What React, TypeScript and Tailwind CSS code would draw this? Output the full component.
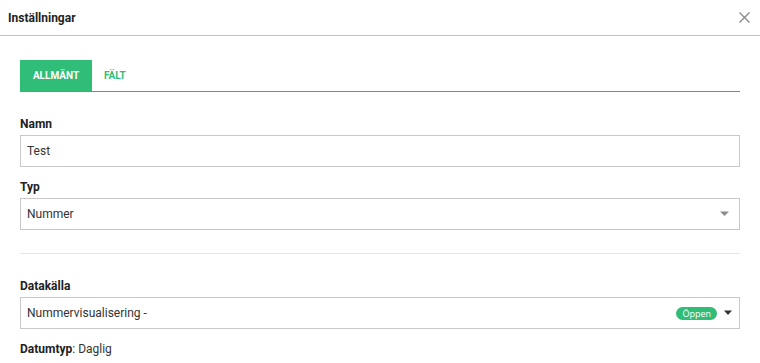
import React from 'react';

function Field({ label, children, className = '' }: { label: string; children: React.ReactNode; className?: string }) {
  return (
    <div className={className}>
      <div className="text-[12px] leading-[16px] font-bold text-[#222] mb-[3px]">{label}</div>
      {children}
    </div>
  );
}

function Caret({ color, w = 9 }: { color: string; w?: number }) {
  return (
    <svg width={w} height="6" viewBox={`0 0 ${w} 6`} className="shrink-0">
      <path d={`M0 0.5 L${w} 0.5 L${w / 2} 5 Z`} fill={color} />
    </svg>
  );
}

export default function App() {
  return (
    <div className="w-[760px] h-[363px] bg-white overflow-hidden font-['Roboto',sans-serif] text-[#333]">
      <div className="h-[36px] flex items-center justify-between pl-2 pr-[10px] border-b border-[#c2c2c2]">
        <span className="text-[12px] font-bold text-[#222]">Inställningar</span>
        <svg width="11" height="11" viewBox="0 0 11 11">
          <path d="M0.5 0.5 L10.5 10.5 M10.5 0.5 L0.5 10.5" stroke="#8a8a8a" strokeWidth="1.4" />
        </svg>
      </div>

      <div className="px-5">
        <div className="mt-6 flex border-b border-[#3aae78]">
          <div className="h-[31px] w-[72px] flex items-center justify-center bg-[#2fbd77] text-white text-[10px] font-bold">
            ALLMÄNT
          </div>
          <div className="h-[31px] px-3 flex items-center text-[#2fbd77] text-[10px] font-bold">FÄLT</div>
        </div>

        <Field label="Namn" className="mt-6">
          <div className="h-[32px] border border-[#c8c8c8] flex items-center px-[6px] text-[12px]">Test</div>
        </Field>

        <Field label="Typ" className="mt-3">
          <div className="h-[32px] border border-[#c8c8c8] flex items-center justify-between pl-[6px] pr-[10px] text-[12px]">
            <span>Nummer</span>
            <Caret color="#8c8c8c" />
          </div>
        </Field>

        <div className="mt-[23px] border-t border-[#e6e6e6]" />

        <Field label="Datakälla" className="mt-6">
          <div className="h-[32px] border border-[#c8c8c8] flex items-center justify-between pl-[6px] pr-[7px] text-[12px]">
            <span>Nummervisualisering -</span>
            <div className="flex items-center gap-[7px]">
              <span className="h-[13px] px-[6px] rounded-full bg-[#2fbd77] text-white text-[9px] leading-[13px] font-['Open_Sans',sans-serif]">
                Öppen
              </span>
              <Caret color="#333" w={8} />
            </div>
          </div>
        </Field>

        <div className="mt-3 text-[12px] leading-[16px]">
          <span className="font-bold text-[#222]">Datumtyp</span>: Daglig
        </div>
      </div>
    </div>
  );
}
